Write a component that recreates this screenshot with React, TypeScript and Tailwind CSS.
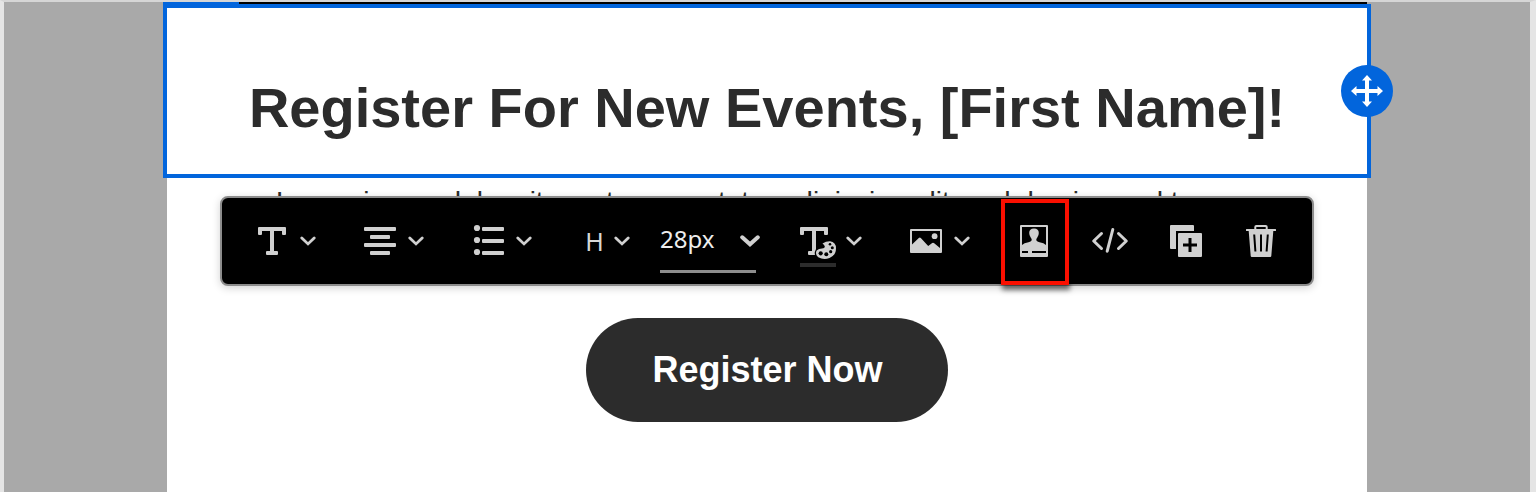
import React from "react";

const ICON = "#d0d0d0";

function Chevron() {
  return (
    <svg width="16" height="36" viewBox="0 0 16 36" className="shrink-0" fill="none" stroke={ICON} strokeWidth="2.8" strokeLinecap="round" strokeLinejoin="miter">
      <path d="M1.8 14.9 8 20.9 14.2 14.9" />
    </svg>
  );
}

function Icon({ children }: { children: React.ReactNode }) {
  return (
    <svg width="36" height="36" viewBox="0 0 36 36" fill={ICON} className="shrink-0 overflow-visible">
      {children}
    </svg>
  );
}

function Tool({ className = "", children }: { className?: string; children: React.ReactNode }) {
  return (
    <button className={`flex shrink-0 items-center gap-[10px] ${className}`}>
      {children}
      <Chevron />
    </button>
  );
}

function Toolbar() {
  return (
    <div className="absolute left-[53px] top-[194px] flex h-[90px] w-[1094px] items-center rounded-lg border-2 border-[#8c8c8c] bg-black shadow-[0_2px_8px_rgba(0,0,0,0.18)]">
      <Tool className="ml-8">
        <Icon>
          <path d="M5 4h26q1 0 1 1v6q0 1-1 1h-2q-1 0-1-1V8h-8v20h3q1 0 1 1v2q0 1-1 1H13q-1 0-1-1v-2q0-1 1-1h3V8H8v3q0 1-1 1H5q-1 0-1-1V5q0-1 1-1z" />
        </Icon>
      </Tool>
      <Tool className="ml-[46px]">
        <Icon>
          <rect x="2" y="4" width="32" height="4" rx="1" />
          <rect x="8" y="12" width="20" height="4" rx="1" />
          <rect x="2" y="20" width="32" height="4" rx="1" />
          <rect x="8" y="28" width="20" height="4" rx="1" />
        </Icon>
      </Tool>
      <Tool className="ml-[46px]">
        <Icon>
          <circle cx="7" cy="5" r="3.1" />
          <circle cx="7" cy="17" r="3.1" />
          <circle cx="7" cy="29" r="3.1" />
          <rect x="12" y="4" width="22" height="4" rx="1" />
          <rect x="12" y="16" width="22" height="4" rx="1" />
          <rect x="12" y="28" width="22" height="4" rx="1" />
        </Icon>
      </Tool>
      <Tool className="ml-[53px]">
        <span className="w-[19px] font-['Noto_Sans',sans-serif] text-[25px] leading-9 text-[#d8d8d8]">H</span>
      </Tool>
      <div className="ml-[30px] flex h-[66px] w-24 shrink-0 -translate-y-px items-center justify-between border-b-[3px] border-[#8e8e8e]">
        <span className="font-['Noto_Sans',sans-serif] text-[24px] leading-9 text-[#ededed]">28px</span>
        <svg width="20" height="36" viewBox="0 0 20 36" className="mr-[-4px] shrink-0" fill="none" stroke={ICON} strokeWidth="4" strokeLinecap="round">
          <path d="m2.200 16.300 7.800 7 7.800-7" />
        </svg>
      </div>
      <Tool className="ml-11">
        <Icon>
          <path d="M1 4h26q1 0 1 1v6q0 1-1 1h-2q-1 0-1-1V8h-8v20q0 4-1.500 4H9q-1 0-1-1v-2q0-1 1-1h3V8H4v3q0 1-1 1H1q-1 0-1-1V5q0-1 1-1z" />
          <path d="M22.500 20.500q3.500-2.300 7.500-2.200 6 1 6 7 0 7-6.500 9.700-6 2.200-11.200-.8-3.600-3-1.600-6.700 2-2 5.300-2 3 0 2.800-2-.3-1.500-2.300-3z" stroke="#000" strokeWidth="2.500" paintOrder="stroke" />
          <g fill="#000">
            <circle cx="20.700" cy="30.300" r="2.100" />
            <circle cx="26.300" cy="31.300" r="2" />
            <circle cx="30.700" cy="28.700" r="1.600" />
            <circle cx="32.300" cy="24.700" r="1.500" />
            <circle cx="30" cy="21.200" r="1.300" />
          </g>
          <rect y="40" width="36" height="4" fill="#2c2c2c" />
        </Icon>
      </Tool>
      <Tool className="ml-[46px]">
        <Icon>
          <path fillRule="evenodd" d="M3 6h30q1 0 1 1v22q0 1-1 1H3q-1 0-1-1V7q0-1 1-1zm1 2v13.500l6.800-6.500q1-1 2 0l7.400 8 4-3q1-.6 2 .2L32 25V8z" />
          <circle cx="26.600" cy="13.200" r="2.900" />
        </Icon>
      </Tool>
      <button className="ml-[31px] mt-[2px] flex h-[86px] w-[68px] shrink-0 items-center justify-center border-4 border-[#fa0f00] shadow-[1px_5px_5px_rgba(0,0,0,0.55)]">
        <svg width="36" height="36" viewBox="0 1 36 36" fill={ICON} className="relative -left-px shrink-0">
          <path fillRule="evenodd" d="M5 2h26q1 0 1 1v30q0 1-1 1H5q-1 0-1-1V3q0-1 1-1zm1 2v18q2-2 6.500-2.800 3.500-.5 3.200-2.700-.2-.8-1-2-1.500-2-1.500-4.500 0-4.500 4.800-4.500t4.800 4.500q0 2.500-1.500 4.500-.8 1.200-1 2-.3 2.200 3.200 2.700Q28 20 30 22V4zM6 28v2h6v-2zm10 0v2h14v-2z" />
        </svg>
      </button>
      <div className="ml-[23px] shrink-0">
        <Icon>
          <g fill="none" stroke={ICON} strokeWidth="3" strokeLinecap="round" strokeLinejoin="round">
            <path d="M9.500 10.500 1.700 18l7.800 7.500M26.500 10.500l7.800 7.500-7.800 7.500" />
            <path d="m20.800 6.500-5.600 21.700" />
          </g>
        </Icon>
      </div>
      <div className="ml-10 shrink-0">
        <Icon>
          <path d="M3 2h22q1 0 1 1v5H8v18H3q-1 0-1-1V3q0-1 1-1z" />
          <path fillRule="evenodd" d="M11 10h22q1 0 1 1v22q0 1-1 1H11q-1 0-1-1V11q0-1 1-1zm9.500 5v5.500H15v3h5.500V29h3v-5.500H29v-3h-5.500V15z" />
        </Icon>
      </div>
      <div className="ml-[39px] shrink-0">
        <Icon>
          <path d="M12.300 6.500V4q0-1 1-1h9.400q1 0 1 1v2.500" fill="none" stroke={ICON} strokeWidth="2" />
          <path d="M3.500 6h29q.5 0 .5.500v1q0 .5-.5.500h-2.200l-2 25q-.1 1-1.100 1H8.800q-1 0-1.100-1L5.700 8H3.500Q3 8 3 7.500v-1Q3 6 3.500 6z" />
          <path d="m11.200 11.500 1.200 17M18 11.500v17M24.800 11.500l-1.200 17" fill="none" stroke="#000" strokeWidth="2" />
        </Icon>
      </div>
    </div>
  );
}

function MoveHandle() {
  return (
    <button className="absolute -right-[26px] top-[57px] flex size-[52px] items-center justify-center rounded-full bg-[#0265dc]">
      <svg width="32" height="32" viewBox="0 0 32 32" fill="white">
        <path d="m16 0 5 5.500h-3V14h8.500v-3L32 16l-5.500 5v-3H18v8.500h3L16 32l-5-5.500h3V18H5.500v3L0 16l5.500-5v3H14V5.500h-3z" />
      </svg>
    </button>
  );
}

export default function App() {
  return (
    <main className="h-[492px] overflow-hidden border-l-4 border-r-[6px] border-t-2 border-l-[#e5e5e5] border-r-[#e5e5e5] border-t-[#d6d6d6] bg-[#a9a9a9] pl-[163px] font-['Liberation_Sans',sans-serif] text-[#2c2c2c]">
      <div className="relative flex h-[490px] w-[1200px] flex-col items-center bg-white">
        <div className="flex h-[2px] w-[1200px] shrink-0 bg-black">
          <div className="-ml-1 w-[76px] bg-[#0265dc]" />
        </div>
        <section className="relative -mx-1 flex h-[174px] w-[1208px] shrink-0 items-center justify-center border-4 border-[#0265dc]">
          <h1 className="mt-[34px] whitespace-nowrap text-[56px] font-bold leading-[72px]">Register For New Events, [First Name]!</h1>
          <MoveHandle />
        </section>
        <p className="mt-[7px] whitespace-nowrap text-[28px] leading-[34px]">Lorem ipsum dolor sit amet, consectetur adipiscing elit, sed do eiusmod tempor</p>
        <button className="mt-[99px] h-[104px] w-[362px] shrink-0 rounded-full bg-[#2c2c2c] pl-px text-[36px] font-bold text-white">Register Now</button>
        <Toolbar />
      </div>
    </main>
  );
}
